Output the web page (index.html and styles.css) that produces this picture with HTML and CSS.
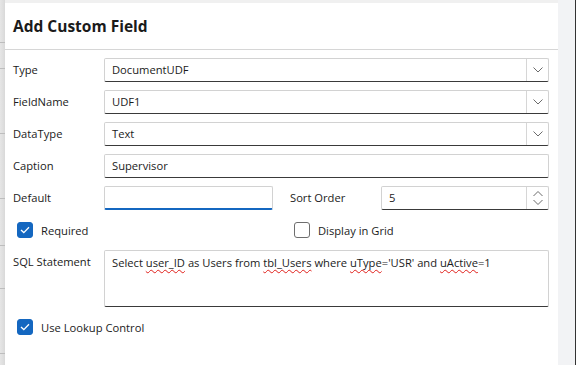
FILE: index.html
```html
<!DOCTYPE html>
<html lang="en">
<head>
  <meta charset="UTF-8">
  <title>Add Custom Field</title>
  <link rel="stylesheet" href="styles.css">
</head>
<body>
  <div class="screen">
    <div class="backdrop-left">
      <div class="bg-row" style="height: 43px"></div>
      <div class="bg-row" style="height: 26px"></div>
      <div class="bg-row" style="height: 65px"></div>
      <div class="bg-row" style="height: 65px"></div>
      <div class="bg-row" style="height: 47px"></div>
      <div class="bg-row" style="height: 43px"></div>
      <div class="bg-row" style="height: 65px"></div>
    </div>

    <div class="dialog">
      <div class="dialog-header">
        <h1>Add Custom Field</h1>
      </div>

      <div class="form">
        <label class="field-label">Type</label>
        <div class="input select span-all">
          <span class="value">DocumentUDF</span>
          <span class="drop-btn">
            <svg width="10" height="6" viewBox="0 0 10 6"><path d="M0.5 0.5 L5 5 L9.5 0.5" fill="none" stroke="#6b6b6b" stroke-width="1"/></svg>
          </span>
        </div>

        <label class="field-label">FieldName</label>
        <div class="input select span-all">
          <span class="value">UDF1</span>
          <span class="drop-btn">
            <svg width="10" height="6" viewBox="0 0 10 6"><path d="M0.5 0.5 L5 5 L9.5 0.5" fill="none" stroke="#6b6b6b" stroke-width="1"/></svg>
          </span>
        </div>

        <label class="field-label">DataType</label>
        <div class="input select span-all">
          <span class="value">Text</span>
          <span class="drop-btn">
            <svg width="10" height="6" viewBox="0 0 10 6"><path d="M0.5 0.5 L5 5 L9.5 0.5" fill="none" stroke="#6b6b6b" stroke-width="1"/></svg>
          </span>
        </div>

        <label class="field-label">Caption</label>
        <div class="input span-all">
          <span class="value">Supervisor</span>
        </div>

        <label class="field-label">Default</label>
        <div class="input focused">
          <span class="value"></span>
        </div>
        <div></div>
        <label class="field-label">Sort Order</label>
        <div class="input select">
          <span class="value">5</span>
          <span class="drop-btn spin">
            <svg width="10" height="16" viewBox="0 0 10 16"><path d="M0.5 6 L5 1.5 L9.5 6 M0.5 10 L5 14.5 L9.5 10" fill="none" stroke="#6b6b6b" stroke-width="1"/></svg>
          </span>
        </div>

        <div class="check-row span-left">
          <span class="checkbox checked">
            <svg width="10" height="8" viewBox="0 0 10 8"><path d="M1 4 L3.8 6.6 L9 1.2" fill="none" stroke="#fff" stroke-width="1.3"/></svg>
          </span>
          <span>Required</span>
        </div>
        <div class="check-row span-right">
          <span class="checkbox"></span>
          <span>Display in Grid</span>
        </div>

        <label class="field-label top">SQL Statement</label>
        <div class="input textarea span-all">
          <span class="value">Select <u class="typo">user_ID</u> as Users from <u class="typo">tbl_Users</u> where <u class="typo">uType</u>='USR' and <u class="typo">uActive</u>=1</span>
        </div>

        <div class="check-row span-full">
          <span class="checkbox checked">
            <svg width="10" height="8" viewBox="0 0 10 8"><path d="M1 4 L3.8 6.6 L9 1.2" fill="none" stroke="#fff" stroke-width="1.3"/></svg>
          </span>
          <span>Use Lookup Control</span>
        </div>
      </div>
    </div>

    <div class="backdrop-right"></div>
  </div>
</body>
</html>
```

FILE: styles.css
```css
html, body {
    margin: 0;
    height: 100%;
}

body {
    font-family: "Open Sans", "Noto Sans", sans-serif;
    font-size: 11.2px;
    color: #1b1b1b;
    background: #f0f0f0;
    overflow: hidden;
}

.screen {
    display: flex;
    height: 365px;
    padding-top: 3px;
    box-sizing: border-box;
}

.backdrop-left {
    width: 5px;
    margin-top: -3px;
    background: linear-gradient(90deg, #e6e6e6, #d9d9d9);
    display: flex;
    flex-direction: column;
}

.bg-row {
    border-bottom: 1px solid #bdbdbd;
    box-sizing: border-box;
}

.backdrop-right {
    width: 17px;
    margin-top: -3px;
    background: #f2f3f5;
    border-right: 1px solid #333;
}

.dialog {
    width: 553px;
    background: #fff;
    display: flex;
    flex-direction: column;
}

.dialog-header {
    height: 47px;
    border-bottom: 1px solid #d6d6d6;
    padding-left: 8px;
    display: flex;
    align-items: center;
    box-sizing: border-box;
}

.dialog-header h1 {
    margin: 0;
    font-size: 15.5px;
    font-weight: 700;
    color: #1b1b1b;
    margin-top: -1px;
}

.form {
    display: grid;
    grid-template-columns: 91px 169px 17px 91px 168px;
    row-gap: 8px;
    padding: 8px 9px 0 8px;
    align-items: center;
}

.field-label {
    line-height: 24px;
}

.field-label.top {
    align-self: start;
    line-height: 24px;
}

.span-all {
    grid-column: 2 / -1;
}

.span-left {
    grid-column: 1 / 3;
}

.span-right {
    grid-column: 4 / -1;
}

.span-full {
    grid-column: 1 / -1;
}

.input {
    height: 24px;
    box-sizing: border-box;
    border: 1px solid #d2d2d2;
    border-bottom-color: #3a3a3a;
    border-radius: 2px;
    display: flex;
    align-items: stretch;
    background: #fff;
}

.input .value {
    flex: 1;
    padding-left: 7px;
    line-height: 22px;
    white-space: nowrap;
}

.input.focused {
    border-bottom: 2px solid #1467c0;
}

.drop-btn {
    width: 21px;
    border-left: 1px solid #d6d6d6;
    display: flex;
    align-items: center;
    justify-content: center;
}

.input.textarea {
    height: 57px;
    align-items: flex-start;
}

.input.textarea .value {
    line-height: 24px;
}

.typo {
    text-decoration: underline wavy #e0201b;
    text-decoration-thickness: 1px;
    text-underline-offset: 2px;
    text-decoration-skip-ink: none;
}

.check-row {
    display: flex;
    align-items: center;
    gap: 8px;
    height: 24px;
    padding-left: 4px;
}

.checkbox {
    width: 16px;
    height: 16px;
    box-sizing: border-box;
    border: 1px solid #6e6e6e;
    border-radius: 3px;
    display: flex;
    align-items: center;
    justify-content: center;
}

.checkbox.checked {
    background: #1467c0;
    border-color: #1467c0;
}
```
